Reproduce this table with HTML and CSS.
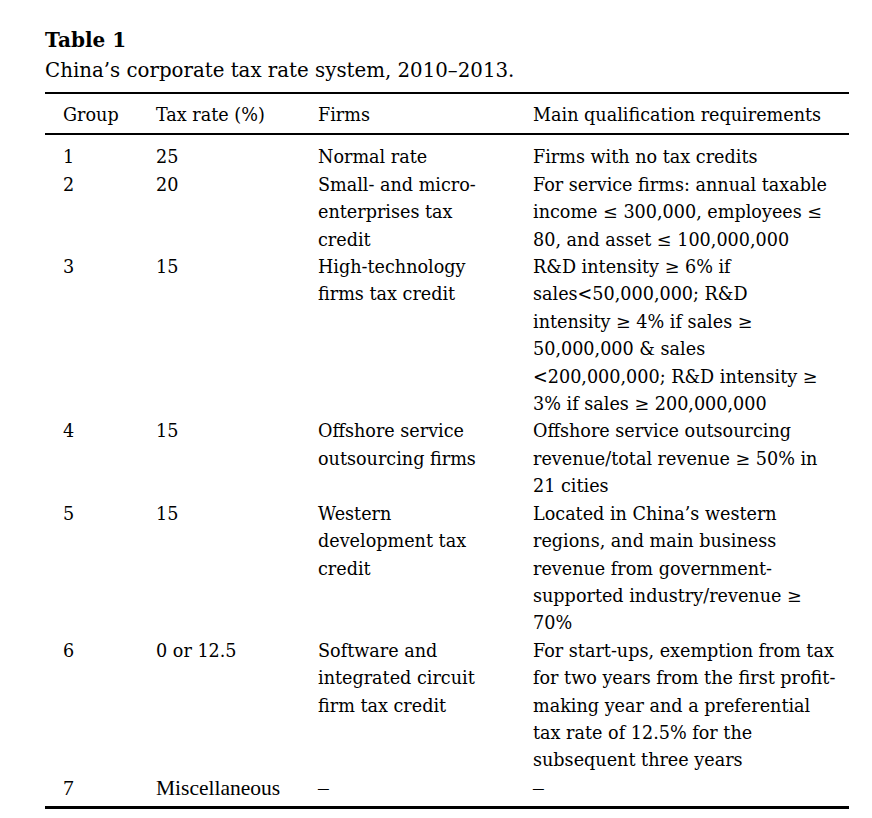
FILE: index.html
```html
<!DOCTYPE html>
<html lang="en">
<head>
<meta charset="utf-8">
<title>Table 1</title>
<link rel="stylesheet" href="styles.css">
</head>
<body>
<div class="page">
  <div class="title">Table 1</div>
  <div class="caption">China’s corporate tax rate system, 2010–2013.</div>
  <div class="table">
    <div class="row head">
      <div>Group</div><div>Tax rate (%)</div><div>Firms</div><div>Main qualification requirements</div>
    </div>
    <div class="body">
      <div class="row">
        <div>1</div><div>25</div><div>Normal rate</div><div>Firms with no tax credits</div>
      </div>
      <div class="row">
        <div>2</div><div>20</div><div>Small- and micro-<br>enterprises tax<br>credit</div><div>For service firms: annual taxable<br>income ≤ 300,000, employees ≤<br>80, and asset ≤ 100,000,000</div>
      </div>
      <div class="row">
        <div>3</div><div>15</div><div>High-technology<br>firms tax credit</div><div>R&amp;D intensity ≥ 6% if<br>sales&lt;50,000,000; R&amp;D<br>intensity ≥ 4% if sales ≥<br>50,000,000 &amp; sales<br>&lt;200,000,000; R&amp;D intensity ≥<br>3% if sales ≥ 200,000,000</div>
      </div>
      <div class="row">
        <div>4</div><div>15</div><div>Offshore service<br>outsourcing firms</div><div>Offshore service outsourcing<br>revenue/total revenue ≥ 50% in<br>21 cities</div>
      </div>
      <div class="row">
        <div>5</div><div>15</div><div>Western<br>development tax<br>credit</div><div>Located in China’s western<br>regions, and main business<br>revenue from government-<br>supported industry/revenue ≥<br>70%</div>
      </div>
      <div class="row">
        <div>6</div><div>0 or 12.5</div><div>Software and<br>integrated circuit<br>firm tax credit</div><div>For start-ups, exemption from tax<br>for two years from the first profit-<br>making year and a preferential<br>tax rate of 12.5% for the<br>subsequent three years</div>
      </div>
      <div class="row misc">
        <div>7</div><div>Miscellaneous</div><div>–</div><div>–</div>
      </div>
    </div>
  </div>
</div>
</body>
</html>
```
FILE: styles.css
```css
html, body {
  margin: 0;
  padding: 0;
  background: #ffffff;
}
body {
  font-family: "DejaVu Serif", serif;
  color: #000000;
}
.page {
  width: 804px;
  padding: 26px 0 0 45px;
}
.title {
  font-weight: bold;
  font-size: 20px;
  line-height: 28px;
}
.caption {
  font-size: 19.8px;
  line-height: 33px;
  margin-bottom: 5px;
}
.table {
  font-size: 17.6px;
  line-height: 27.4px;
  border-top: 2px solid #000;
  border-bottom: 3px solid #000;
}
.row {
  display: grid;
  grid-template-columns: 93px 162px 215px 1fr;
  padding-left: 18px;
}
.head {
  padding-top: 8px;
  padding-bottom: 4px;
  border-bottom: 2px solid #000;
}
.body {
  padding-top: 9px;
  padding-bottom: 4px;
}
.misc {
  font-family: "Liberation Serif", serif;
  font-size: 21.5px;
}
```
